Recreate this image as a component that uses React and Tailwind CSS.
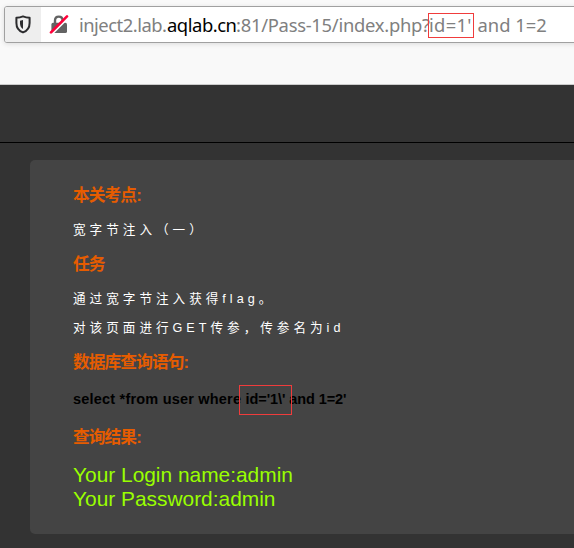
import React from "react";

const sans = "font-['Liberation_Sans','Noto_Sans_CJK_SC',sans-serif]";

function ShieldIcon() {
  return (
    <svg width="18" height="20" viewBox="0 0 18 20" fill="none">
      <path d="M9 1.4 C6.8 2.3 4.6 2.7 2.4 2.8 V7.9 C2.4 12.4 5 15.9 9 17.4 C13 15.9 15.6 12.4 15.6 7.9 V2.8 C13.4 2.7 11.2 2.3 9 1.4Z" stroke="#2b2b2d" strokeWidth="2" strokeLinejoin="round" />
      <path d="M9 5 L6 5.8 V8.2 C6 10.9 7 12.8 9 13.9Z" fill="#2b2b2d" />
    </svg>
  );
}

function InsecureLockIcon() {
  return (
    <svg width="20" height="20" viewBox="0 0 20 20" fill="none">
      <path d="M6 9 V5.6 C6 3.2 7.4 1.6 9.8 1.6 C12.2 1.6 13.6 3.2 13.6 5.6 V9" stroke="#636363" strokeWidth="2.4" />
      <rect x="2.4" y="7.8" width="15.6" height="10.2" rx="1.6" fill="#636363" />
      <path d="M3 19 L19.2 2.8" stroke="#fff" strokeWidth="1.8" />
      <path d="M2 17.4 L18 1.4" stroke="#ff0039" strokeWidth="2.6" strokeLinecap="round" />
    </svg>
  );
}

function Heading({ children, className }) {
  return (
    <h3 className={`h-6 text-[16.7px] leading-6 font-bold tracking-[-0.9px] text-[#e65c00] ${className}`}>{children}</h3>
  );
}

function Note({ children, className }) {
  return (
    <p className={`h-5 text-[12.6px] leading-5 tracking-[4px] text-white ${className}`}>{children}</p>
  );
}

export default function App() {
  return (
    <div lang="zh-CN" className={`h-[548px] w-[574px] overflow-hidden bg-[#333] whitespace-nowrap ${sans}`}>
      <header className="h-[85px] border-b border-[#ccc] bg-[#f9f9f9] pt-[6px] pl-1">
        <div className="flex h-[37px] w-[580px] rounded-[3px] border border-[#a0a0a0] bg-white shadow-[0_1px_5px_rgba(0,0,0,0.12)]">
          <div className="flex w-9 shrink-0 items-center justify-center rounded-l-[2px] bg-[#eee]">
            <ShieldIcon />
          </div>
          <div className="ml-[8px] flex w-5 shrink-0 items-center">
            <InsecureLockIcon />
          </div>
          <div className="ml-[10px] flex h-[35px] font-['Noto_Sans',sans-serif] text-[18.4px] leading-[35px] text-[#808080]">
            <span className="w-[88px] tracking-[-0.5px]">inject2.lab.</span>
            <span className="w-[69px] tracking-[-0.45px] text-black">aqlab.cn</span>
            <span className="w-[193px] tracking-[-0.27px]">:81/Pass-15/index.php?</span>
            <span className="relative w-[44px] tracking-[0.3px]">
              id=1'
              <span className="absolute top-[6px] left-[-1px] h-[25px] w-[46px] border border-[#f03c3c]" />
            </span>
            <span className="ml-[4.5px]">and 1=2</span>
          </div>
        </div>
      </header>
      <div className="h-[58px] border-b border-black" />
      <main className="mt-[17px] ml-[30px] h-[374px] w-[560px] rounded-[5px] bg-[#444] pt-[24px] pl-[43px]">
        <Heading>本关考点:</Heading>
        <Note className="mt-[12px]">宽字节注入（一）</Note>
        <Heading className="mt-[13px]">任务</Heading>
        <Note className="mt-[12px]">通过宽字节注入获得flag。</Note>
        <Note className="mt-[9px]">对该页面进行GET传参，传参名为id</Note>
        <Heading className="mt-[13px]">数据库查询语句:</Heading>
        <p className="mt-[14px] h-5 text-[14.5px] leading-5 font-bold text-black">
          <span className="tracking-[0.2px]">select *from user where </span>
          <span className="relative tracking-[-0.05px]">
            id='1\'
            <span className="absolute top-[-6px] left-[-6px] h-[30px] w-[53px] border border-[#f03c3c]" />
          </span>
          <span className="tracking-[-0.1px]"> and 1=2'</span>
        </p>
        <Heading className="mt-[17px]">查询结果:</Heading>
        <p className="mt-[13px] text-[20.9px] leading-6 text-[#99ff00]">
          Your Login name:admin
          <br />
          Your Password:admin
        </p>
      </main>
    </div>
  );
}
